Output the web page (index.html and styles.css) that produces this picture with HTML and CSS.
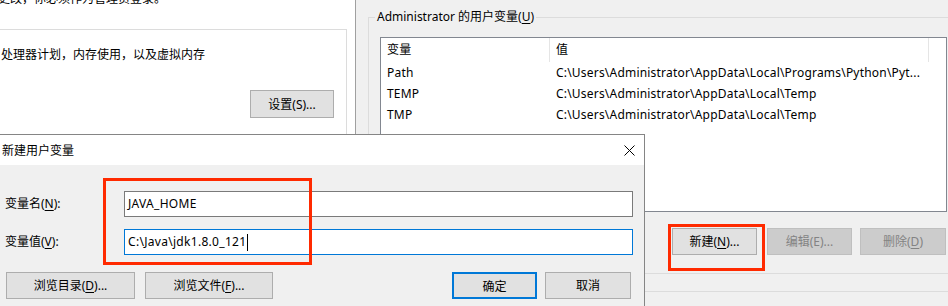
FILE: index.html
```html
<!DOCTYPE html>
<html lang="zh-CN">
<head>
  <meta charset="UTF-8">
  <meta name="viewport" content="width=device-width, initial-scale=1">
  <title>新建用户变量</title>
  <link rel="stylesheet" href="styles.css">
</head>
<body>
  <div class="desktop">
    <!-- 系统属性 (背后的窗口) -->
    <div class="win sys-props">
      <p class="note">更改，你必须作为管理员登录。</p>
      <div class="group perf">
        <p class="perf-text">处理器计划，内存使用，以及虚拟内存</p>
        <button class="btn perf-btn">设置(S)...</button>
      </div>
    </div>

    <!-- 环境变量 -->
    <div class="win env-vars">
      <div class="group user-vars">
        <div class="group-title"><span>Administrator 的用户变量(<u>U</u>)</span></div>
        <div class="listview">
          <div class="lv-row lv-head">
            <span class="lv-name">变量</span>
            <span class="lv-value">值</span>
          </div>
          <div class="lv-row">
            <span class="lv-name">Path</span>
            <span class="lv-value">C:\Users\Administrator\AppData\Local\Programs\Python\Pyt...</span>
          </div>
          <div class="lv-row">
            <span class="lv-name">TEMP</span>
            <span class="lv-value">C:\Users\Administrator\AppData\Local\Temp</span>
          </div>
          <div class="lv-row">
            <span class="lv-name">TMP</span>
            <span class="lv-value">C:\Users\Administrator\AppData\Local\Temp</span>
          </div>
        </div>
        <div class="btn-row">
          <button class="btn btn-new">新建(<u>N</u>)...</button>
          <button class="btn btn-edit" disabled>编辑(E)...</button>
          <button class="btn btn-del" disabled>删除(<u>D</u>)</button>
        </div>
      </div>
      <div class="group sys-vars"></div>
    </div>

    <!-- 新建用户变量 对话框 -->
    <div class="dialog">
      <div class="dlg-title">
        <span>新建用户变量</span>
        <svg class="dlg-close" width="11" height="11" viewBox="0 0 11 11">
          <path d="M0.5 0.5 L10.5 10.5 M10.5 0.5 L0.5 10.5" stroke="#000" stroke-width="1" fill="none"/>
        </svg>
      </div>
      <div class="dlg-body">
        <div class="field-grid">
          <label for="var-name">变量名(<u>N</u>):</label>
          <div class="textbox" id="var-name">JAVA_HOME</div>
          <label for="var-value">变量值(<u>V</u>):</label>
          <div class="textbox focused" id="var-value">C:\Java\jdk1.8.0_121<span class="caret"></span></div>
        </div>
        <div class="dlg-buttons">
          <button class="btn btn-dir">浏览目录(<u>D</u>)...</button>
          <button class="btn btn-file">浏览文件(<u>F</u>)...</button>
          <button class="btn btn-ok">确定</button>
          <button class="btn btn-cancel">取消</button>
        </div>
      </div>
    </div>

    <!-- 标注框 -->
    <div class="mark mark-fields"></div>
    <div class="mark mark-new"></div>
  </div>
</body>
</html>
```

FILE: styles.css
```css
* {
  box-sizing: border-box;
}

body {
  margin: 0;
  width: 948px;
  height: 306px;
  overflow: hidden;
  background-color: #f0f0f0;
  font-family: "Noto Sans", "Noto Sans CJK SC", sans-serif;
  font-size: 12px;
  color: #000;
}

p {
  margin: 0;
}

u {
  text-decoration: underline;
  text-underline-offset: 2px;
}

.desktop {
  position: relative;
  width: 948px;
  height: 306px;
  overflow: hidden;
}

.win {
  position: absolute;
  top: 0;
  height: 306px;
}

.group {
  border: 1px solid #dcdcdc;
}

/* buttons */
.btn {
  height: 27px;
  padding: 0;
  font: inherit;
  line-height: 25px;
  color: #000;
  background-color: #e1e1e1;
  border: 1px solid #adadad;
  white-space: nowrap;
}

.btn:disabled {
  color: #838383;
  background-color: #cccccc;
  border-color: #bfbfbf;
}

/* system properties window */
.sys-props {
  left: 0;
  width: 356px;
  background-color: #fff;
  border-right: 1px solid #a0a0a0;
}

.note {
  margin: -9px 0 0 -2px;
  line-height: 16px;
  white-space: nowrap;
}

.perf {
  display: flex;
  flex-direction: column;
  width: 357px;
  height: 140px;
  margin: 22px 0 0 -10px;
}

.perf-text {
  padding: 17px 0 0 10px;
  line-height: 16px;
}

.perf-btn {
  align-self: flex-end;
  width: 84px;
  height: 28px;
  margin: 27px 12px 0 0;
}

/* environment variables window */
.env-vars {
  left: 356px;
  right: 0;
  padding: 17px 0 0 12px;
  background-color: #f0f0f0;
}

.user-vars {
  width: 600px;
  height: 257px;
  padding-left: 11px;
}

.group-title {
  height: 16px;
  margin: -9px 0 0 -5px;
  line-height: 16px;
}

.group-title span {
  padding: 0 2px;
  background-color: #f0f0f0;
}

.listview {
  width: 567px;
  height: 175px;
  margin-top: 12px;
  background-color: #fff;
  border: 1px solid #828790;
}

.lv-row {
  display: flex;
  height: 21px;
  line-height: 21px;
  letter-spacing: 0.2px;
  white-space: nowrap;
}

.lv-head {
  height: 24px;
  line-height: 24px;
}

.lv-name {
  width: 169px;
  padding-left: 6px;
}

.lv-value {
  width: 379px;
  padding-left: 6px;
  overflow: hidden;
}

.lv-head span {
  border-right: 1px solid #e5e5e5;
}

.btn-row {
  display: flex;
  justify-content: flex-end;
  width: 566px;
  margin-top: 16px;
}

.btn-new {
  width: 85px;
}

.btn-edit {
  width: 85px;
  margin-left: 10px;
}

.btn-del {
  width: 86px;
  margin-left: 8px;
}

.sys-vars {
  width: 600px;
  height: 40px;
  margin-top: 17px;
}

/* new user variable dialog */
.dialog {
  position: absolute;
  left: -1px;
  top: 134px;
  width: 646px;
  height: 180px;
  background-color: #f0f0f0;
  border: 1px solid #858585;
}

.dlg-title {
  display: flex;
  align-items: center;
  justify-content: space-between;
  height: 30px;
  padding: 0 9px 0 2px;
  background-color: #fff;
}

.dlg-close {
  display: block;
}

.dlg-body {
  padding: 26px 13px 0 5px;
}

.field-grid {
  display: grid;
  grid-template-columns: 119px 509px;
  grid-auto-rows: 26px;
  row-gap: 12px;
  align-items: center;
}

.field-grid label {
  line-height: 26px;
}

.textbox {
  height: 26px;
  padding-left: 3px;
  line-height: 24px;
  letter-spacing: 0.3px;
  background-color: #fff;
  border: 1px solid #7a7a7a;
  white-space: nowrap;
}

.textbox.focused {
  border-color: #0078d7;
}

.caret {
  display: inline-block;
  width: 1px;
  height: 17px;
  margin-left: 1px;
  vertical-align: middle;
  background-color: #000;
}

.dlg-buttons {
  display: flex;
  margin-top: 17px;
}

.btn-dir {
  width: 129px;
  margin-left: 1px;
}

.btn-file {
  width: 128px;
  margin-left: 10px;
}

.btn-ok {
  width: 85px;
  margin-left: auto;
  border: 2px solid #0078d7;
}

.btn-cancel {
  width: 86px;
  margin-left: 8px;
}

/* red annotation boxes */
.mark {
  position: absolute;
  border: 3px solid #ff2a00;
}

.mark-fields {
  left: 103px;
  top: 178px;
  width: 209px;
  height: 87px;
}

.mark-new {
  left: 668px;
  top: 224px;
  width: 97px;
  height: 47px;
}
```
